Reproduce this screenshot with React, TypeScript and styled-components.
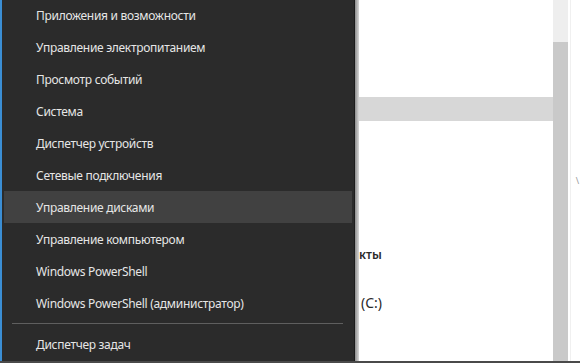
import React from 'react';
import styled, { createGlobalStyle } from 'styled-components';

const GlobalStyle = createGlobalStyle`
  html, body {
    margin: 0;
    padding: 0;
    background: #ffffff;
  }
  body {
    width: 580px;
    height: 363px;
    overflow: hidden;
    font-family: 'Noto Sans', 'Open Sans', sans-serif;
  }
`;

const Screen = styled.div`
  display: flex;
  width: 580px;
  height: 361px;
  border-bottom: 2px solid #4a4a4a;
  overflow: hidden;
`;

const AccentEdge = styled.div`
  width: 2px;
  background: #3b8ed4;
  flex-shrink: 0;
`;

const Menu = styled.nav`
  width: 352px;
  flex-shrink: 0;
  background: #2b2b2b;
  display: flex;
  flex-direction: column;
  margin-top: -1px;
  border-right: 1px solid #1c1c1c;
`;

const MenuItem = styled.div<{ $active?: boolean }>`
  height: 32px;
  margin: 0 2px;
  padding-left: 32px;
  display: flex;
  align-items: center;
  font-size: 12px;
  letter-spacing: -0.3px;
  color: #e6e6e6;
  background: ${(p) => (p.$active ? '#414141' : 'transparent')};
  white-space: nowrap;
`;

const Separator = styled.div`
  height: 1px;
  margin: 4px 11px 4px 10px;
  background: #5f5f5f;
`;

const Shadow = styled.div`
  width: 4px;
  flex-shrink: 0;
  background: linear-gradient(to right, #8d8d8d, #d8d8d8);
`;

const Window = styled.div`
  flex: 1;
  display: flex;
`;

const Content = styled.div`
  width: 194px;
  display: flex;
  flex-direction: column;
  background: #ffffff;
`;

const Gap = styled.div<{ $h: number }>`
  height: ${(p) => p.$h}px;
`;

const Band = styled.div`
  height: 24px;
  background: #d7d7d7;
`;

const Line = styled.div<{ $bold?: boolean }>`
  height: 20px;
  display: flex;
  align-items: center;
  padding-left: ${(p) => (p.$bold ? 0 : 2)}px;
  font-size: ${(p) => (p.$bold ? 12 : 14)}px;
  font-weight: ${(p) => (p.$bold ? 600 : 400)};
  color: #2a2a2a;
  white-space: nowrap;
`;

const Scrollbar = styled.div`
  width: 15px;
  display: flex;
  flex-direction: column;
  background: #c9c9c9;
`;

const ScrollTrack = styled.div`
  height: 42px;
  background: #eeeeee;
`;

const Rest = styled.div`
  flex: 1;
  border-left: 2px solid #ffffff;
  display: flex;
  align-items: center;
  justify-content: flex-end;
`;

const Edge = styled.div`
  width: 1px;
  align-self: stretch;
  background: #f0f0f0;
  margin-right: auto;
`;

const Tick = styled.span`
  font-size: 9px;
  color: #999999;
  margin-right: 1px;
`;

const items = [
  'Приложения и возможности',
  'Управление электропитанием',
  'Просмотр событий',
  'Система',
  'Диспетчер устройств',
  'Сетевые подключения',
  'Управление дисками',
  'Управление компьютером',
  'Windows PowerShell',
  'Windows PowerShell (администратор)',
];

const App: React.FC = () => (
  <>
    <GlobalStyle />
    <Screen>
      <AccentEdge />
      <Menu>
        {items.map((t) => (
          <MenuItem key={t} $active={t === 'Управление дисками'}>
            {t}
          </MenuItem>
        ))}
        <Separator />
        <MenuItem>Диспетчер задач</MenuItem>
      </Menu>
      <Shadow />
      <Window>
        <Content>
          <Gap $h={97} />
          <Band />
          <Gap $h={123} />
          <Line $bold>кты</Line>
          <Gap $h={28} />
          <Line>(C:)</Line>
        </Content>
        <Scrollbar>
          <ScrollTrack />
        </Scrollbar>
        <Rest>
          <Edge />
          <Tick>\</Tick>
        </Rest>
      </Window>
    </Screen>
  </>
);

export default App;
